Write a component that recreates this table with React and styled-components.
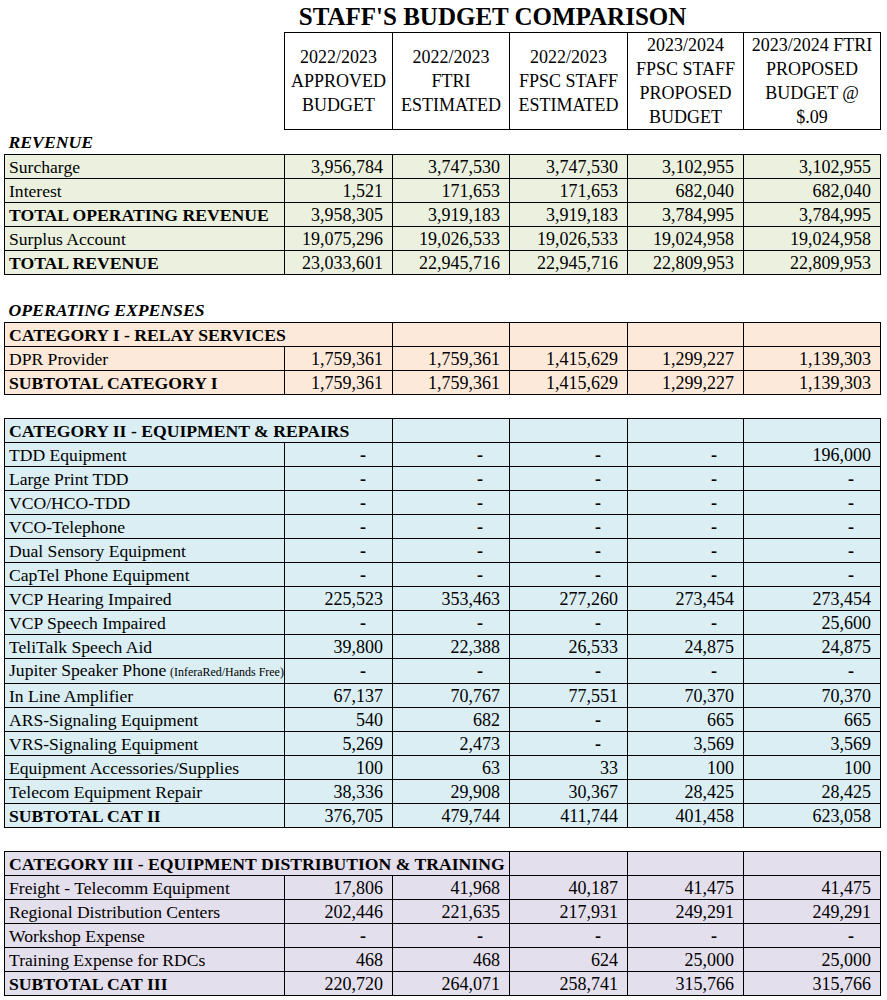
import React from "react";
import styled, { createGlobalStyle } from "styled-components";

const GlobalStyle = createGlobalStyle`
  html, body {
    margin: 0;
    padding: 0;
    background: #ffffff;
  }
  body {
    font-family: "Liberation Serif", "Times New Roman", serif;
    color: #000;
  }
`;

const COLORS = {
  revenue: "#ebf1de",
  cat1: "#fde9d9",
  cat2: "#daeef3",
  cat3: "#e4dfec",
};

const HEADERS = [
  ["2022/2023", "APPROVED", "BUDGET"],
  ["2022/2023", "FTRI", "ESTIMATED"],
  ["2022/2023", "FPSC STAFF", "ESTIMATED"],
  ["2023/2024", "FPSC STAFF", "PROPOSED", "BUDGET"],
  ["2023/2024 FTRI", "PROPOSED", "BUDGET @", "$.09"],
];

const D = ["-", "-", "-", "-", "-"];

const revenue = [
  { label: "Surcharge", values: ["3,956,784", "3,747,530", "3,747,530", "3,102,955", "3,102,955"] },
  { label: "Interest", values: ["1,521", "171,653", "171,653", "682,040", "682,040"] },
  { label: "TOTAL OPERATING REVENUE", bold: true, values: ["3,958,305", "3,919,183", "3,919,183", "3,784,995", "3,784,995"] },
  { label: "Surplus Account", values: ["19,075,296", "19,026,533", "19,026,533", "19,024,958", "19,024,958"] },
  { label: "TOTAL REVENUE", bold: true, values: ["23,033,601", "22,945,716", "22,945,716", "22,809,953", "22,809,953"] },
];

const categories = [
  {
    title: "CATEGORY I - RELAY SERVICES",
    span: 2,
    bg: COLORS.cat1,
    rows: [
      { label: "DPR Provider", values: ["1,759,361", "1,759,361", "1,415,629", "1,299,227", "1,139,303"] },
      { label: "SUBTOTAL CATEGORY I", bold: true, values: ["1,759,361", "1,759,361", "1,415,629", "1,299,227", "1,139,303"] },
    ],
  },
  {
    title: "CATEGORY II - EQUIPMENT & REPAIRS",
    span: 2,
    bg: COLORS.cat2,
    rows: [
      { label: "TDD Equipment", values: ["-", "-", "-", "-", "196,000"] },
      { label: "Large Print TDD", values: D },
      { label: "VCO/HCO-TDD", values: D },
      { label: "VCO-Telephone", values: D },
      { label: "Dual Sensory Equipment", values: D },
      { label: "CapTel Phone Equipment", values: D },
      { label: "VCP Hearing Impaired", values: ["225,523", "353,463", "277,260", "273,454", "273,454"] },
      { label: "VCP Speech Impaired", values: ["-", "-", "-", "-", "25,600"] },
      { label: "TeliTalk Speech Aid", values: ["39,800", "22,388", "26,533", "24,875", "24,875"] },
      { label: "Jupiter Speaker Phone", note: "(InferaRed/Hands Free)", values: D },
      { label: "In Line Amplifier", values: ["67,137", "70,767", "77,551", "70,370", "70,370"] },
      { label: "ARS-Signaling Equipment", values: ["540", "682", "-", "665", "665"] },
      { label: "VRS-Signaling Equipment", values: ["5,269", "2,473", "-", "3,569", "3,569"] },
      { label: "Equipment Accessories/Supplies", values: ["100", "63", "33", "100", "100"] },
      { label: "Telecom Equipment Repair", values: ["38,336", "29,908", "30,367", "28,425", "28,425"] },
      { label: "SUBTOTAL CAT II", bold: true, values: ["376,705", "479,744", "411,744", "401,458", "623,058"] },
    ],
  },
  {
    title: "CATEGORY III - EQUIPMENT DISTRIBUTION & TRAINING",
    span: 3,
    bg: COLORS.cat3,
    rows: [
      { label: "Freight - Telecomm Equipment", values: ["17,806", "41,968", "40,187", "41,475", "41,475"] },
      { label: "Regional Distribution Centers", values: ["202,446", "221,635", "217,931", "249,291", "249,291"] },
      { label: "Workshop Expense", values: D },
      { label: "Training Expense for RDCs", values: ["468", "468", "624", "25,000", "25,000"] },
      { label: "SUBTOTAL CAT III", bold: true, values: ["220,720", "264,071", "258,741", "315,766", "315,766"] },
    ],
  },
];

const Page = styled.div`
  padding-left: 4px;
`;

const Sheet = styled.table`
  border-collapse: collapse;
  table-layout: fixed;
  width: 877px;
  font-size: 18px;
  line-height: 1;
`;

const TitleCell = styled.td`
  height: 32px;
  padding: 0 0 0 100px;
  text-align: center;
  vertical-align: bottom;
  font-size: 25px;
  font-weight: bold;
  line-height: 30px;
`;

const HeadCell = styled.td`
  height: 95px;
  padding: 0;
  border: 1px solid #000;
  text-align: center;
  vertical-align: middle;
  line-height: 24px;
`;

const SectionLabel = styled.td`
  height: ${(p) => p.$h || 24}px;
  padding: 0 0 0 4px;
  font-size: 17.7px;
  font-weight: bold;
  font-style: italic;
  vertical-align: bottom;
  line-height: 23px;
`;

const Spacer = styled.td`
  height: 23px;
  padding: 0;
`;

const Row = styled.tr`
  background: ${(p) => p.$bg};
  height: 24px;
`;

const Cell = styled.td`
  height: 23px;
  padding: 0 4px;
  border: 1px solid #000;
  white-space: nowrap;
  overflow: hidden;
  vertical-align: middle;
  line-height: 22px;
`;

const LabelCell = styled(Cell)`
  font-size: ${(p) => (p.$bold ? 17.65 : 17.6)}px;
  font-weight: ${(p) => (p.$bold ? "bold" : "normal")};
`;

const NumCell = styled(Cell)`
  text-align: right;
  padding-right: ${(p) => (p.$dash ? 26 : 9)}px;
  font-weight: ${(p) => (p.$dash ? "bold" : "normal")};
`;

const Note = styled.span`
  display: inline-block;
  margin-left: 4px;
  font-size: 13px;
  transform: scaleX(0.92);
  transform-origin: left center;
`;

const DataRow = ({ row, bg }) => (
  <Row $bg={bg}>
    <LabelCell $bold={row.bold}>
      {row.label}
      {row.note && <Note>{row.note}</Note>}
    </LabelCell>
    {row.values.map((v, i) => (
      <NumCell key={i} $dash={v === "-"}>
        {v}
      </NumCell>
    ))}
  </Row>
);

const CategoryHead = ({ cat }) => (
  <Row $bg={cat.bg}>
    <LabelCell $bold colSpan={cat.span}>
      {cat.title}
    </LabelCell>
    {Array.from({ length: 6 - cat.span }).map((_, i) => (
      <Cell key={i} />
    ))}
  </Row>
);

const BlankRow = () => (
  <tr>
    <Spacer colSpan={6} />
  </tr>
);

export default function App() {
  return (
    <Page>
      <GlobalStyle />
      <Sheet>
        <colgroup>
          <col style={{ width: 280 }} />
          <col style={{ width: 108 }} />
          <col style={{ width: 117 }} />
          <col style={{ width: 118 }} />
          <col style={{ width: 116 }} />
          <col style={{ width: 137 }} />
        </colgroup>
        <tbody>
          <tr>
            <TitleCell colSpan={6}>STAFF'S BUDGET COMPARISON</TitleCell>
          </tr>
          <tr>
            <td />
            {HEADERS.map((lines, i) => (
              <HeadCell key={i}>
                {lines.map((l, j) => (
                  <div key={j}>{l}</div>
                ))}
              </HeadCell>
            ))}
          </tr>
          <tr>
            <SectionLabel colSpan={6} $h={24}>
              REVENUE
            </SectionLabel>
          </tr>
          {revenue.map((r) => (
            <DataRow key={r.label} row={r} bg={COLORS.revenue} />
          ))}
          <BlankRow />
          <tr>
            <SectionLabel colSpan={6} $h={24}>
              OPERATING EXPENSES
            </SectionLabel>
          </tr>
          {categories.map((cat, ci) => (
            <React.Fragment key={cat.title}>
              {ci > 0 && <BlankRow />}
              <CategoryHead cat={cat} />
              {cat.rows.map((r) => (
                <DataRow key={r.label} row={r} bg={cat.bg} />
              ))}
            </React.Fragment>
          ))}
        </tbody>
      </Sheet>
    </Page>
  );
}
